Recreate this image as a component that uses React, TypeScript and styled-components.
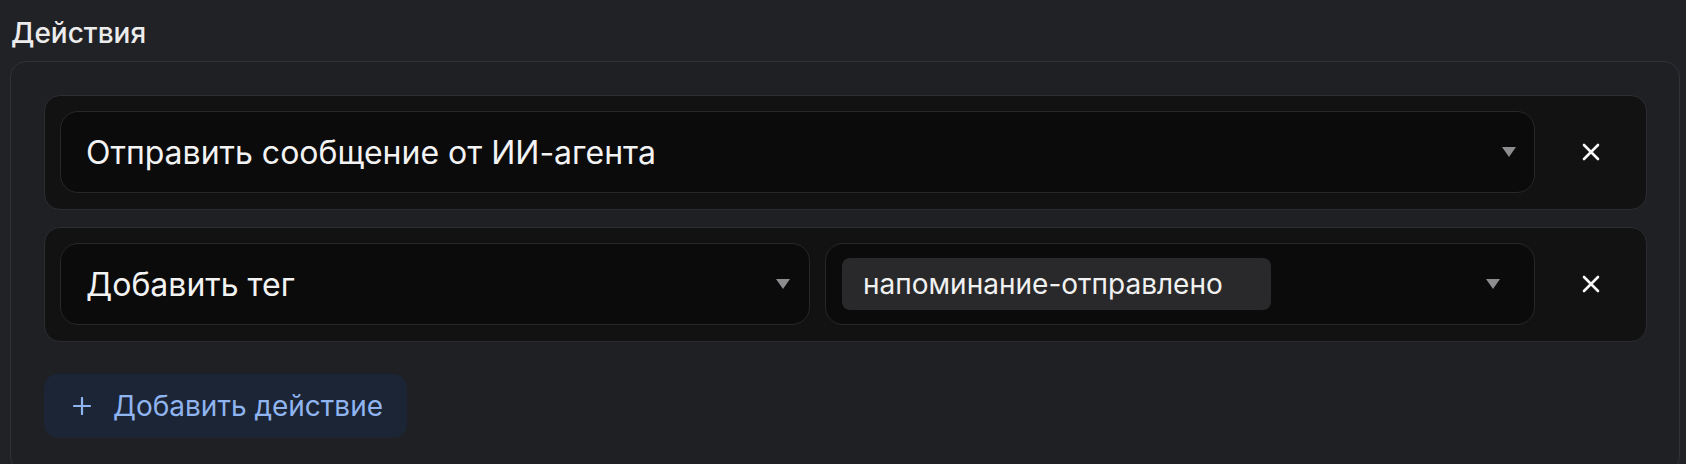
import React from "react";
import styled, { createGlobalStyle } from "styled-components";

const Global = createGlobalStyle`
  html, body {
    margin: 0;
    padding: 0;
    background: #212226;
    overflow: hidden;
  }
  body {
    font-family: Inter, "Noto Sans", "DejaVu Sans", sans-serif;
    color: #f2f2f2;
    -webkit-font-smoothing: antialiased;
  }
`;

const Page = styled.div`
  padding: 16px 6px 0 10px;
  width: 1686px;
  height: 464px;
  box-sizing: border-box;
`;

const Heading = styled.div`
  font-size: 28px;
  font-weight: 500;
  line-height: 34px;
  height: 34px;
  padding-left: 1px;
  color: #ececec;
  margin-bottom: 11px;
`;

const Panel = styled.div`
  border: 1px solid #313238;
  border-radius: 16px;
  background: #1f2024;
  padding: 33px 32px 33px 33px;
  display: flex;
  flex-direction: column;
  align-items: flex-start;
`;

const Cards = styled.div`
  display: flex;
  flex-direction: column;
  gap: 17px;
  width: 100%;
`;

const Card = styled.div`
  border: 1px solid #2c2d31;
  border-radius: 16px;
  background: #121213;
  padding: 15px 15px 16px;
  display: flex;
  align-items: center;
  gap: 16px;
`;

const Fields = styled.div<{ $cols: string }>`
  flex: 1;
  display: grid;
  grid-template-columns: ${(p) => p.$cols};
  gap: 15px;
`;

const Select = styled.div<{ $arrowRight: number; $padLeft: number }>`
  position: relative;
  height: 82px;
  box-sizing: border-box;
  border: 1px solid #27282b;
  border-radius: 18px;
  background: #0b0b0c;
  display: flex;
  align-items: center;
  padding-left: ${(p) => p.$padLeft}px;
  padding-right: ${(p) => p.$arrowRight + 30}px;
  font-size: 32px;
  color: #f3f3f3;
  white-space: nowrap;
`;

const Arrow = styled.span<{ $right: number }>`
  position: absolute;
  right: ${(p) => p.$right}px;
  top: 50%;
  transform: translateY(-50%);
  width: 0;
  height: 0;
  border-left: 7px solid transparent;
  border-right: 7px solid transparent;
  border-top: 10px solid #8d8d8f;
`;

const Chip = styled.span`
  display: inline-flex;
  align-items: center;
  height: 52px;
  box-sizing: border-box;
  padding: 0 48px 0 21px;
  border-radius: 8px;
  background: #29292b;
  font-size: 28px;
  color: #f1f1f1;
`;

const CloseButton = styled.button`
  width: 80px;
  height: 82px;
  border: 0;
  background: transparent;
  display: flex;
  align-items: center;
  justify-content: center;
  padding: 0;
  cursor: pointer;
  color: #f7f7f7;
`;

const AddButton = styled.button`
  margin-top: 32px;
  height: 64px;
  border: 0;
  border-radius: 14px;
  background: #1b2535;
  color: #8fb4ef;
  display: flex;
  align-items: center;
  gap: 22px;
  padding: 0 24px 0 29px;
  font-family: Inter, "Noto Sans", sans-serif;
  font-size: 28px;
  white-space: nowrap;
  cursor: pointer;
`;

const CloseIcon = () => (
  <svg width="18" height="18" viewBox="0 0 18 18" fill="none">
    <path d="M2 2 L16 16 M16 2 L2 16" stroke="currentColor" strokeWidth="2.6" strokeLinecap="round" />
  </svg>
);

const PlusIcon = () => (
  <svg width="18" height="18" viewBox="0 0 18 18" fill="none">
    <path d="M9 1 V17 M1 9 H17" stroke="currentColor" strokeWidth="2.2" strokeLinecap="round" />
  </svg>
);

export default function App() {
  return (
    <>
      <Global />
      <Page>
        <Heading>Действия</Heading>
        <Panel>
          <Cards>
            <Card>
              <Fields $cols="1fr">
                <Select $padLeft={25} $arrowRight={18}>
                  Отправить сообщение от ИИ-агента
                  <Arrow $right={18} />
                </Select>
              </Fields>
              <CloseButton aria-label="Удалить">
                <CloseIcon />
              </CloseButton>
            </Card>
            <Card>
              <Fields $cols="749fr 709fr">
                <Select $padLeft={25} $arrowRight={19}>
                  Добавить тег
                  <Arrow $right={19} />
                </Select>
                <Select $padLeft={16} $arrowRight={34}>
                  <Chip>напоминание-отправлено</Chip>
                  <Arrow $right={34} />
                </Select>
              </Fields>
              <CloseButton aria-label="Удалить">
                <CloseIcon />
              </CloseButton>
            </Card>
          </Cards>
          <AddButton>
            <PlusIcon />
            Добавить действие
          </AddButton>
        </Panel>
      </Page>
    </>
  );
}
